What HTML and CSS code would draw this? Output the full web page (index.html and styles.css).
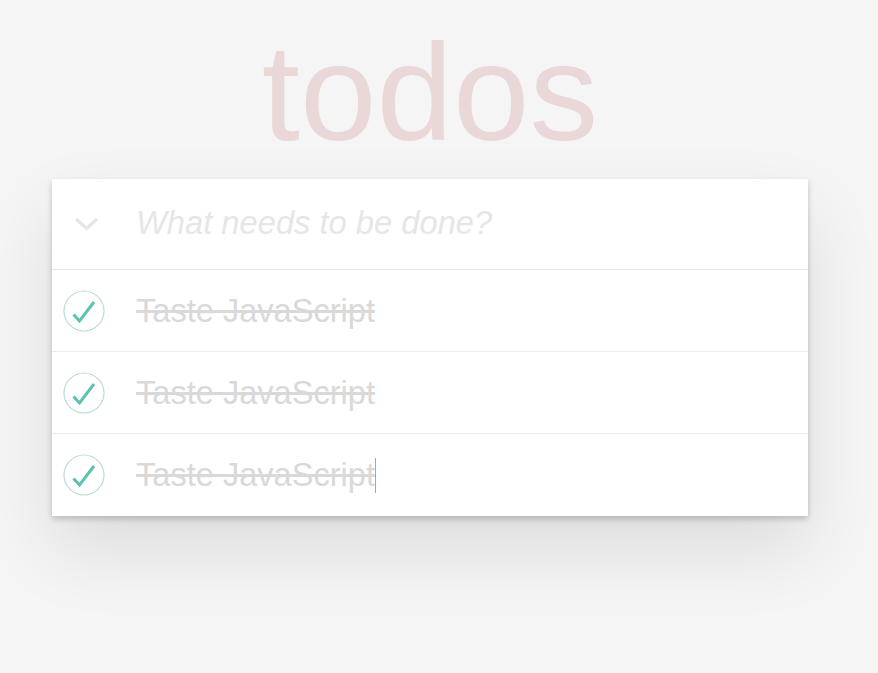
FILE: index.html
```
<!DOCTYPE html>
<html lang="en">
<head>
<meta charset="utf-8">
<title>todos</title>
<link rel="stylesheet" href="styles.css">
</head>
<body>
<section class="todoapp">
  <h1 class="title">todos</h1>
  <div class="panel">
    <header class="header">
      <span class="toggle-all">
        <svg width="26" height="16" viewBox="0 0 26 16"><polyline points="2,3 12.5,12.5 23,3" fill="none" stroke="#e6e6e6" stroke-width="3.4"/></svg>
      </span>
      <span class="placeholder">What needs to be done?</span>
    </header>
    <ul class="todo-list">
      <li class="item">
        <span class="toggle"><svg width="42" height="42" viewBox="0 0 42 42"><circle cx="21" cy="21" r="20" fill="none" stroke="#bddad5" stroke-width="1.2"/><polyline points="10.5,24.5 16.5,31 31,12" fill="none" stroke="#5dc2af" stroke-width="3"/></svg></span>
        <span class="label">Taste JavaScript</span>
      </li>
      <li class="item">
        <span class="toggle"><svg width="42" height="42" viewBox="0 0 42 42"><circle cx="21" cy="21" r="20" fill="none" stroke="#bddad5" stroke-width="1.2"/><polyline points="10.5,24.5 16.5,31 31,12" fill="none" stroke="#5dc2af" stroke-width="3"/></svg></span>
        <span class="label">Taste JavaScript</span>
      </li>
      <li class="item">
        <span class="toggle"><svg width="42" height="42" viewBox="0 0 42 42"><circle cx="21" cy="21" r="20" fill="none" stroke="#bddad5" stroke-width="1.2"/><polyline points="10.5,24.5 16.5,31 31,12" fill="none" stroke="#5dc2af" stroke-width="3"/></svg></span>
        <span class="label">Taste JavaScript</span><span class="caret"></span>
      </li>
    </ul>
  </div>
</section>
</body>
</html>
```
FILE: styles.css
```
html, body {
  margin: 0;
  padding: 0;
}
body {
  background: #f5f5f5;
  font-family: "Liberation Sans", Arial, Helvetica, sans-serif;
  color: #111;
  min-height: 673px;
}
.todoapp {
  width: 756px;
  margin-left: 52px;
  display: flex;
  flex-direction: column;
}
.title {
  margin: 24px 0 17.5px 0;
  height: 137.5px;
  font-size: 137.5px;
  line-height: 137.5px;
  font-weight: 400;
  text-align: center;
  color: rgba(175, 47, 47, 0.15);
}
.panel {
  background: #fff;
  box-shadow: 0 3px 6px 0 rgba(0, 0, 0, 0.2), 0 34px 69px 0 rgba(0, 0, 0, 0.1);
}
.header {
  height: 87px;
  padding-bottom: 3px;
  display: flex;
  align-items: center;
  border-bottom: 1px solid #e8e8e8;
}
.toggle-all {
  width: 84px;
  display: flex;
  padding-left: 22px;
  box-sizing: border-box;
  padding-top: 3px;
}
.placeholder {
  font-size: 32.7px;
  font-style: italic;
  color: #e6e6e6;
  line-height: 40px;
}
.todo-list {
  list-style: none;
  margin: 0;
  padding: 0;
}
.item {
  height: 82px;
  box-sizing: border-box;
  display: flex;
  align-items: center;
  border-bottom: 1px solid #ededed;
}
.item:last-child {
  border-bottom: none;
}
.toggle {
  width: 84px;
  padding-left: 11px;
  box-sizing: border-box;
  display: flex;
}
.label {
  font-size: 32.6px;
  line-height: 40px;
  color: #d9d9d9;
  text-decoration: line-through;
}
.caret {
  display: inline-block;
  width: 1px;
  height: 35px;
  background: #a8a8a8;
  align-self: center;
}
```
